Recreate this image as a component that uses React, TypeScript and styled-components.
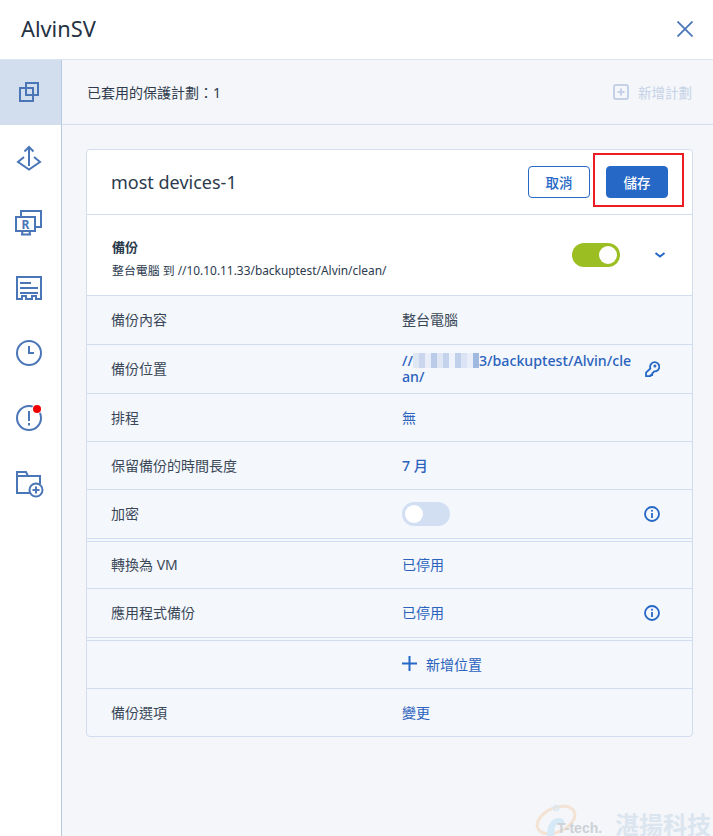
import React from 'react';
import styled, { createGlobalStyle } from 'styled-components';

const GlobalStyle = createGlobalStyle`
  html, body {
    margin: 0;
    padding: 0;
    background: #fff;
  }
  body {
    font-family: "Noto Sans", "Noto Sans CJK TC", sans-serif;
    font-size: 14px;
    color: #2c3a4d;
  }
  * {
    box-sizing: border-box;
  }
`;

const ICON = '#4a76b8';
const LINK = '#2668c5';
const LINE = '#d2deef';

const Page = styled.div`
  width: 713px;
  height: 836px;
  display: flex;
  flex-direction: column;
  overflow: hidden;
  position: relative;
`;

const TopBar = styled.header`
  height: 60px;
  flex: none;
  display: flex;
  align-items: center;
  justify-content: space-between;
  padding: 0 20px 2px 21px;
  border-bottom: 1px solid #dfe5ee;
`;

const Title = styled.h1`
  margin: 0;
  font-size: 21.8px;
  font-weight: 400;
  color: #243142;
`;

const CloseButton = styled.button`
  width: 16px;
  height: 16px;
  padding: 0;
  border: 0;
  background: none;
  display: block;
  svg {
    display: block;
  }
`;

const Body = styled.div`
  flex: 1;
  display: flex;
  min-height: 0;
`;

const Sidebar = styled.nav`
  width: 62px;
  flex: none;
  border-right: 1px solid #b9c9df;
  background: #fff;
`;

const SideItem = styled.div<{ $active?: boolean }>`
  height: 65px;
  display: flex;
  align-items: center;
  justify-content: center;
  padding-right: 3px;
  background: ${p => (p.$active ? '#d2ddee' : 'transparent')};
  border-bottom: ${p => (p.$active ? `1px solid ${LINE}` : '0')};
  svg {
    display: block;
  }
`;

const Main = styled.main`
  flex: 1;
  background: #f4f6f9;
  display: flex;
  flex-direction: column;
`;

const SubHeader = styled.div`
  height: 65px;
  flex: none;
  display: flex;
  align-items: center;
  justify-content: space-between;
  padding: 0 21px 0 25px;
  border-bottom: 1px solid ${LINE};
`;

const PlanCount = styled.span`
  font-size: 14px;
  color: #2f3b4c;
`;

const AddPlan = styled.span`
  display: flex;
  align-items: center;
  gap: 9px;
  font-size: 13.5px;
  color: #c4d2e7;
  svg {
    display: block;
  }
`;

const Content = styled.div`
  padding: 24px 20px 0 24px;
`;

const Card = styled.section`
  background: #f4f7fc;
  border: 1px solid ${LINE};
  border-radius: 4px;
`;

const CardHead = styled.div`
  height: 65px;
  background: #fff;
  border-bottom: 1px solid ${LINE};
  border-radius: 4px 4px 0 0;
  display: flex;
  align-items: center;
  justify-content: space-between;
  padding: 0 24px;
`;

const PlanName = styled.div`
  font-size: 18px;
  color: #2c3a4d;
`;

const Actions = styled.div`
  display: flex;
  gap: 16px;
`;

const Button = styled.button<{ $primary?: boolean }>`
  width: 62px;
  height: 32px;
  padding: 0;
  border-radius: 4px;
  border: 1px solid ${LINK};
  font-family: inherit;
  font-size: 13.5px;
  font-weight: 500;
  color: ${p => (p.$primary ? '#fff' : LINK)};
  background: ${p => (p.$primary ? LINK : '#fff')};
  position: relative;
`;

const Highlight = styled.span`
  position: absolute;
  left: -14px;
  top: -14px;
  width: 91px;
  height: 54px;
  border: 2px solid #ed1c24;
  pointer-events: none;
`;

const BackupHead = styled.div`
  height: 81px;
  background: #fff;
  border-bottom: 1px solid ${LINE};
  display: flex;
  align-items: center;
  padding: 0 26px 0 25px;
`;

const BackupText = styled.div`
  flex: 1;
  padding-top: 6px;
`;

const BackupTitle = styled.div`
  font-size: 13px;
  font-weight: 700;
  line-height: 20px;
  color: #2c3a4d;
`;

const BackupSummary = styled.div`
  font-size: 11.9px;
  line-height: 18px;
  margin-top: 4px;
  color: #2c3a4d;
`;

const Toggle = styled.span<{ $on?: boolean }>`
  width: 48px;
  height: 24px;
  border-radius: 12px;
  flex: none;
  display: flex;
  align-items: center;
  padding: 0 3px;
  justify-content: ${p => (p.$on ? 'flex-end' : 'flex-start')};
  background: ${p => (p.$on ? '#9bbf22' : '#d2dff2')};
  &::after {
    content: '';
    width: 18px;
    height: 18px;
    border-radius: 50%;
    background: #fff;
  }
`;

const Chevron = styled.span`
  margin-left: 34px;
  width: 12px;
  height: 24px;
  display: flex;
  align-items: center;
  svg {
    display: block;
  }
`;

const Row = styled.div<{ $double?: boolean; $last?: boolean; $tall?: boolean }>`
  height: ${p => (p.$last ? '47px' : p.$tall ? '49px' : '48px')};
  display: grid;
  grid-template-columns: 290px 1fr 26px;
  align-items: center;
  padding: 0 32px 0 25px;
  border-bottom: ${p => (p.$last ? '0' : `1px solid ${LINE}`)};
  ${p => (p.$double ? `box-shadow: 0 2px 0 #f4f7fc, 0 3px 0 ${LINE}; margin-bottom: 2px;` : '')}
`;

const Label = styled.div`
  font-size: 14px;
  margin-left: -1px;
  padding-bottom: 2px;
  color: #3a4758;
`;

const Value = styled.div<{ $plain?: boolean; $strong?: boolean }>`
  font-size: ${p => (p.$strong ? '14.2px' : '14px')};
  line-height: 16px;
  color: ${p => (p.$plain ? '#3a4758' : '#2a62bd')};
  font-weight: ${p => (p.$strong ? 500 : 400)};
  word-break: break-all;
`;

const Masked = styled.span`
  display: inline-flex;
  vertical-align: -2px;
  height: 15px;
  width: 66px;
`;

const MaskBlock = styled.span<{ $tone: string }>`
  flex: 1;
  background: ${p => p.$tone};
`;

const RowIcon = styled.div`
  display: flex;
  justify-content: flex-end;
  svg {
    display: block;
  }
`;

const AddLocation = styled.div`
  display: flex;
  align-items: center;
  gap: 9px;
  font-size: 14px;
  padding-bottom: 1px;
  color: #2a62bd;
  grid-column: 2;
  svg {
    display: block;
  }
`;

const Watermark = styled.div`
  position: absolute;
  right: 0;
  bottom: 0;
  width: 178px;
  height: 34px;
  display: flex;
  align-items: flex-end;
  svg {
    display: block;
    flex: none;
  }
`;

const WatermarkLatin = styled.span`
  font-family: "Liberation Sans", sans-serif;
  font-size: 14px;
  font-weight: 700;
  color: #ccd1d7;
  margin-left: -20px;
  width: 58px;
  flex: none;
  line-height: 15px;
`;

const WatermarkCjk = styled.span`
  font-family: "Noto Sans CJK TC", sans-serif;
  font-size: 24px;
  font-weight: 700;
  line-height: 24px;
  white-space: nowrap;
  color: #dbe5ef;
`;

const InfoIcon = () => (
  <svg width="16" height="16" viewBox="0 0 16 16" fill="none">
    <circle cx="8" cy="8" r="7" stroke={LINK} strokeWidth="1.8" />
    <rect x="7.1" y="7" width="1.8" height="5" fill={LINK} />
    <rect x="7.1" y="3.8" width="1.8" height="1.8" fill={LINK} />
  </svg>
);

const KeyIcon = () => (
  <svg width="16" height="16" viewBox="0 0 16 16" fill="none" stroke={LINK} strokeWidth="1.8" strokeLinejoin="round">
    <path d="M6.100 6a4.600 4.600 0 1 1 4.200 4.400L8.200 12.500v1.700H6.400v1H2v-3.500L6.400 7.500A4.600 4.600 0 0 1 6.100 6z" />
    <circle cx="10.900" cy="5" r="0.6" />
  </svg>
);

const sideIcons = [
  <>
    <rect x="7" y="12" width="13" height="13" />
    <rect x="13" y="7" width="12" height="12" />
  </>,
  <>
    <path d="M16 24V5M11.500 9.500 16 5l4.500 4.500" />
    <path d="M11 15 5 20l11 7.500L27 20l-6-5" />
  </>,
  <>
    <path d="M8 9V4h20v16h-5" />
    <rect x="3" y="10" width="19" height="14" />
    <path d="M9.500 24 9 27.500h8l-.5-3.500" />
    <text x="12.500" y="21.500" fontFamily="Noto Sans, sans-serif" fontSize="12" fontWeight="700" textAnchor="middle" fill={ICON} stroke="none">R</text>
  </>,
  <>
    <path d="M4 5h24v22h-5v-3h-4v3h-6v-3H9v3H4z" />
    <path d="M7 11h11M7 16h18M7 21h18" />
  </>,
  <>
    <circle cx="16" cy="16" r="12" />
    <path d="M16 9v7h5" />
  </>,
  <>
    <circle cx="16" cy="16" r="12" />
    <path d="M16 9v10M16 21v2.400" />
    <circle cx="24" cy="7" r="5" fill="#fff" stroke="none" />
    <circle cx="24" cy="7" r="4" fill="#ee0000" stroke="none" />
  </>,
  <>
    <path d="M27 17V9H15l-2-4H4v21h13M4 9h11" />
    <circle cx="23" cy="23" r="6.500" />
    <path d="M23 19.500v7M19.500 23h7" />
  </>,
];

const maskTones = ['#dfe7f5', '#c9d6ee', '#e9eef8', '#b9cbe8', '#dfe7f5', '#c4d3ec', '#eef2fa', '#c0d0ea', '#dbe4f4', '#e9eef8', '#9fb8e0'];

const App = () => (
  <Page>
    <GlobalStyle />
    <TopBar>
      <Title>AlvinSV</Title>
      <CloseButton aria-label="close">
        <svg width="16" height="16" viewBox="0 0 16 16" fill="none" stroke={ICON} strokeWidth="1.8">
          <path d="M.5.5l15 15M15.500.5l-15 15" />
        </svg>
      </CloseButton>
    </TopBar>
    <Body>
      <Sidebar>
        {sideIcons.map((icon, i) => (
          <SideItem key={i} $active={i === 0}>
            <svg width="32" height="32" viewBox="0 0 32 32" fill="none" stroke={ICON} strokeWidth="2">
              {icon}
            </svg>
          </SideItem>
        ))}
      </Sidebar>
      <Main>
        <SubHeader>
          <PlanCount>已套用的保護計劃：1</PlanCount>
          <AddPlan>
            <svg width="16" height="16" viewBox="0 0 16 16" fill="none" stroke="#c4d2e7" strokeWidth="2">
              <rect x="1" y="1" width="14" height="14" rx="2" />
              <path d="M8 4.500v7M4.500 8h7" />
            </svg>
            新增計劃
          </AddPlan>
        </SubHeader>
        <Content>
          <Card>
            <CardHead>
              <PlanName>most devices-1</PlanName>
              <Actions>
                <Button>取消</Button>
                <Button $primary>
                  儲存
                  <Highlight />
                </Button>
              </Actions>
            </CardHead>
            <BackupHead>
              <BackupText>
                <BackupTitle>備份</BackupTitle>
                <BackupSummary>整台電腦 到 //10.10.11.33/backuptest/Alvin/clean/</BackupSummary>
              </BackupText>
              <Toggle $on />
              <Chevron>
                <svg width="12" height="8" viewBox="0 0 12 8" fill="none" stroke={LINK} strokeWidth="2">
                  <path d="M1.500 2 6 5.500 10.500 2" />
                </svg>
              </Chevron>
            </BackupHead>
            <Row $tall>
              <Label>備份內容</Label>
              <Value $plain>整台電腦</Value>
            </Row>
            <Row $tall>
              <Label>備份位置</Label>
              <Value $strong>
                //
                <Masked>
                  {maskTones.map((tone, i) => (
                    <MaskBlock key={i} $tone={tone} />
                  ))}
                </Masked>
                3/backuptest/Alvin/clean/
              </Value>
              <RowIcon>
                <KeyIcon />
              </RowIcon>
            </Row>
            <Row>
              <Label>排程</Label>
              <Value>無</Value>
            </Row>
            <Row>
              <Label>保留備份的時間長度</Label>
              <Value $strong>7 月</Value>
            </Row>
            <Row $double $tall>
              <Label>加密</Label>
              <Toggle />
              <RowIcon>
                <InfoIcon />
              </RowIcon>
            </Row>
            <Row>
              <Label>轉換為 VM</Label>
              <Value>已停用</Value>
            </Row>
            <Row $double $tall>
              <Label>應用程式備份</Label>
              <Value>已停用</Value>
              <RowIcon>
                <InfoIcon />
              </RowIcon>
            </Row>
            <Row $tall>
              <AddLocation>
                <svg width="15" height="15" viewBox="0 0 15 15" fill="none" stroke={LINK} strokeWidth="2">
                  <path d="M7.500 0v15M0 7.500h15" />
                </svg>
                新增位置
              </AddLocation>
            </Row>
            <Row $last>
              <Label>備份選項</Label>
              <Value>變更</Value>
            </Row>
          </Card>
        </Content>
      </Main>
    </Body>
    <Watermark>
      <svg width="42" height="34" viewBox="0 0 42 34" fill="none">
        <ellipse cx="21" cy="18" rx="20" ry="12" stroke="#f4e3d5" strokeWidth="3" transform="rotate(-25 21 18)" />
        <path d="M12 34c0-12 5-18 12-18 4 0 6 3 5 6h-7c-3 2-3 8-3 12z" fill="#d5e9f6" />
        <circle cx="21" cy="6" r="2.500" stroke="#d5e9f6" strokeWidth="1.500" />
      </svg>
      <WatermarkLatin>T-tech.</WatermarkLatin>
      <WatermarkCjk>湛揚科技</WatermarkCjk>
    </Watermark>
  </Page>
);

export default App;
